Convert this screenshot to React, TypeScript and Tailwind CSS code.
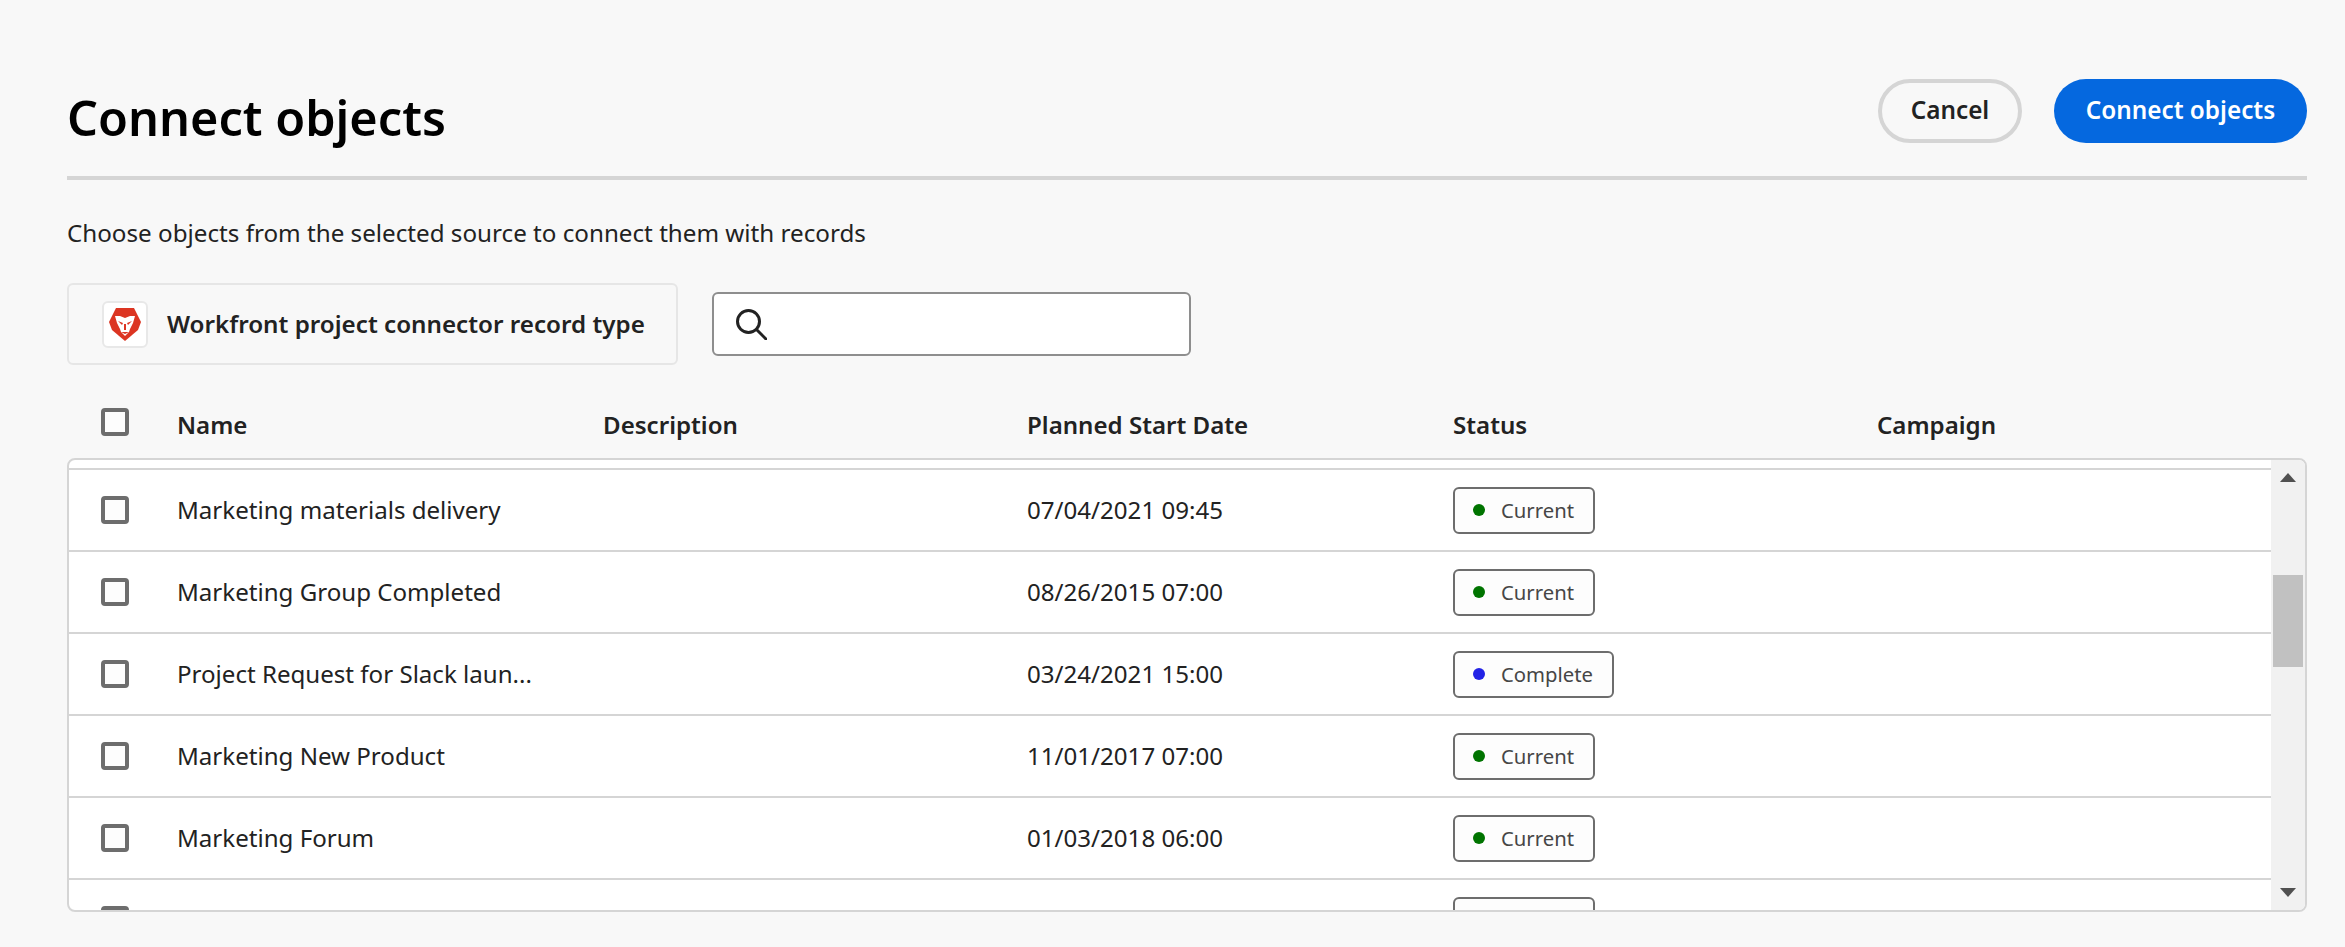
const font = "font-['Noto_Sans',sans-serif]";

const rows = [
  { name: "Marketing materials delivery", date: "07/04/2021 09:45", status: "Current" },
  { name: "Marketing Group Completed", date: "08/26/2015 07:00", status: "Current" },
  { name: "Project Request for Slack laun...", date: "03/24/2021 15:00", status: "Complete" },
  { name: "Marketing New Product", date: "11/01/2017 07:00", status: "Current" },
  { name: "Marketing Forum", date: "01/03/2018 06:00", status: "Current" },
  { name: "Marketing Group", date: "05/12/2019 08:00", status: "Current" },
];

const Checkbox = () => (
  <span className="block h-7 w-7 rounded-[4px] border-4 border-[#6d6d6d] bg-[#fdfdfd]" />
);

const StatusBadge = ({ status }: { status: string }) => (
  <span className="inline-flex h-[47px] items-center gap-[16px] rounded-[6px] border-2 border-[#6d6d6d] bg-[#fdfdfd] pl-[18px] pr-[19px] text-[20.3px] text-[#464646]">
    <span
      className={`h-3 w-3 rounded-full ${status === "Complete" ? "bg-[#2323e6]" : "bg-[#007400]"}`}
    />
    {status}
  </span>
);

const LionLogo = () => (
  <span className="flex h-[47px] w-[46px] items-center justify-center rounded-[6px] border-2 border-[#e8e8e8] bg-white">
    <svg width="32" height="33" viewBox="0 0 32 33">
      <path d="M7 0h18l7 14-3 8-13 11L3 22 0 14z" fill="#dc3522" />
      <path d="M6 8l5 0 5 2 5-2 5 0-2 7-3 6-1 3-4 4-4-4-1-3-3-6z" fill="#fff" />
      <path d="M9 13l5 2-1 2zM23 13l-5 2 1 2zM15 16h2v6h-2zM12 24h8l-4 2z" fill="#dc3522" />
    </svg>
  </span>
);

export default function App() {
  return (
    <div className={`${font} h-[947px] overflow-hidden bg-[#f8f8f8] pl-[67px] pr-[38px] pt-[79px] text-[#222222]`}>
      {/* Header */}
      <div className="flex h-[101px] items-start justify-between border-b-4 border-[#d5d5d5]">
        <h1 className="text-[48.6px] font-semibold leading-[76px] text-black">Connect objects</h1>
        <div className="flex gap-8">
          <button className="h-16 w-[144px] rounded-full border-4 border-[#d5d5d5] pb-[2px] text-[24.3px] font-semibold">
            Cancel
          </button>
          <button className="h-16 w-[253px] rounded-full bg-[#0568df] pb-[2px] text-[24.3px] font-semibold text-white">
            Connect objects
          </button>
        </div>
      </div>

      <p className="mt-[37px] text-[24.2px] leading-[32px]">
        Choose objects from the selected source to connect them with records
      </p>

      {/* Source and search */}
      <div className="mt-[34px] flex items-center gap-[34px]">
        <div className="flex h-[82px] w-[611px] items-center gap-[19px] rounded-[6px] border-2 border-[#e6e6e6] pl-[33px]">
          <LionLogo />
          <span className="text-[24.2px] font-semibold">Workfront project connector record type</span>
        </div>
        <div className="flex h-[64px] w-[479px] items-center rounded-[6px] border-2 border-[#8e8e8e] bg-white pl-[22px]">
          <svg width="31" height="31" viewBox="0 0 31 31" fill="none" stroke="#222222" strokeWidth="3" strokeLinecap="round">
            <circle cx="12.5" cy="12.5" r="11" />
            <path d="M20.5 20.5L30 30" />
          </svg>
        </div>
      </div>

      {/* Table header */}
      <div className="mt-[27px] grid h-[66px] grid-cols-[76px_426px_424px_426px_424px_1fr] items-center pl-[34px] text-[24.1px] font-semibold">
        <span className="-mt-[6px]"><Checkbox /></span>
        <span>Name</span>
        <span>Description</span>
        <span>Planned Start Date</span>
        <span>Status</span>
        <span>Campaign</span>
      </div>

      {/* Table body */}
      <div className="flex h-[454px] overflow-hidden rounded-[8px] border-2 border-[#d5d5d5] bg-white">
        <div className="min-w-0 flex-1 overflow-hidden pt-2">
          {rows.map((row) => (
            <div
              key={row.name}
              className="grid h-[82px] grid-cols-[76px_426px_424px_426px_1fr] items-center border-t-2 border-[#d5d5d5] pl-8 text-[24.1px]"
            >
              <Checkbox />
              <span className="truncate">{row.name}</span>
              <span />
              <span>{row.date}</span>
              <span className="flex"><StatusBadge status={row.status} /></span>
            </div>
          ))}
        </div>
        <div className="flex w-[34px] shrink-0 flex-col items-center bg-[#f1f1f1] px-[2px]">
          <svg width="16" height="9" viewBox="0 0 16 9" className="mt-[13px]" fill="#505050">
            <path d="M8 0l8 9H0z" />
          </svg>
          <div className="mt-[93px] h-[92px] w-[30px] bg-[#c1c1c1]" />
          <svg width="16" height="9" viewBox="0 0 16 9" className="mb-[13px] mt-auto" fill="#505050">
            <path d="M0 0h16l-8 9z" />
          </svg>
        </div>
      </div>
    </div>
  );
}
